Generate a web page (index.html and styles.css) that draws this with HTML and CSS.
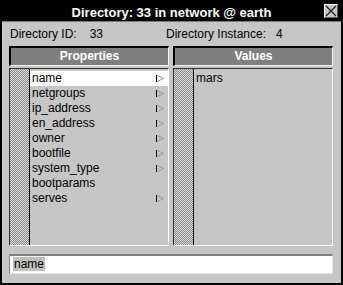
FILE: index.html
```html
<!DOCTYPE html>
<html lang="en">
<head>
  <meta charset="UTF-8" />
  <title>Directory: 33 in network @ earth</title>
  <link rel="stylesheet" href="styles.css">
</head>
<body>
  <svg class="defs" width="0" height="0">
    <defs>
      <pattern id="stipple" width="2" height="2" patternUnits="userSpaceOnUse">
        <rect width="2" height="2" fill="#d8d8d8"/>
        <rect width="1" height="1" fill="#8c8c8c"/>
        <rect x="1" y="1" width="1" height="1" fill="#8c8c8c"/>
      </pattern>
      <symbol id="arrow" viewBox="0 0 8 7">
        <path d="M0.5 0 V7" stroke="#000" stroke-width="1"/>
        <path d="M1.5 0.5 L7.5 3.5 L1.5 6.5" stroke="#999" stroke-width="1" fill="none"/>
      </symbol>
    </defs>
  </svg>

  <div class="window">
    <div class="titlebar">
      <span class="title">Directory: 33 in network @ earth</span>
      <button class="close" aria-label="Close">
        <svg width="12" height="12" viewBox="0 0 12 12">
          <path d="M1 1 L11 11 M11 1 L1 11" stroke="#202020" stroke-width="1.3" fill="none"/>
        </svg>
      </button>
    </div>

    <div class="content">
      <div class="info">
        <div class="info-item info-id">Directory ID:<span class="info-value">33</span></div>
        <div class="info-item">Directory Instance:<span class="info-value">4</span></div>
      </div>

      <div class="columns">
        <div class="column">
          <div class="col-head">Properties</div>
          <div class="panel">
            <svg class="gutter"><rect width="100%" height="100%" fill="url(#stipple)"/></svg>
            <ul class="list">
              <li class="row selected">name<svg class="arrow"><use href="#arrow"/></svg></li>
              <li class="row">netgroups<svg class="arrow"><use href="#arrow"/></svg></li>
              <li class="row">ip_address<svg class="arrow"><use href="#arrow"/></svg></li>
              <li class="row">en_address<svg class="arrow"><use href="#arrow"/></svg></li>
              <li class="row">owner<svg class="arrow"><use href="#arrow"/></svg></li>
              <li class="row">bootfile<svg class="arrow"><use href="#arrow"/></svg></li>
              <li class="row">system_type<svg class="arrow"><use href="#arrow"/></svg></li>
              <li class="row">bootparams</li>
              <li class="row">serves<svg class="arrow"><use href="#arrow"/></svg></li>
            </ul>
          </div>
        </div>

        <div class="column">
          <div class="col-head">Values</div>
          <div class="panel">
            <svg class="gutter"><rect width="100%" height="100%" fill="url(#stipple)"/></svg>
            <ul class="list">
              <li class="row">mars</li>
            </ul>
          </div>
        </div>
      </div>

      <div class="field"><span class="field-sel">name</span></div>
    </div>
  </div>
</body>
</html>
```

FILE: styles.css
```css
* {
  margin: 0;
  padding: 0;
  box-sizing: border-box;
}

body {
  font-family: 'Liberation Sans', Arial, sans-serif;
  font-size: 12px;
  color: #000;
  background: #c6c6c6;
}

.defs {
  position: absolute;
}

.window {
  width: 343px;
  height: 285px;
  border: 2px solid #000;
  background: #c6c6c6;
  display: flex;
  flex-direction: column;
}

/* title bar */
.titlebar {
  height: 20px;
  background: #000;
  border-bottom: 1px solid #7a7a7a;
  display: grid;
  grid-template-columns: 1fr auto 1fr;
  align-items: start;
  padding: 2px 3px 0;
}

.title {
  grid-column: 2;
  color: #fff;
  font-weight: bold;
  font-size: 13px;
  line-height: 16px;
  padding-top: 1px;
  white-space: nowrap;
}

.close {
  grid-column: 3;
  justify-self: end;
  width: 14px;
  height: 14px;
  background: #c6c6c6;
  border: 1px solid;
  border-color: #f0f0f0 #606060 #606060 #f0f0f0;
  display: flex;
  align-items: center;
  justify-content: center;
}

/* body */
.content {
  flex: 1;
  padding: 5px 8px 9px 7px;
  display: flex;
  flex-direction: column;
}

.info {
  display: flex;
  line-height: 14px;
  padding-left: 1px;
}

.info-id {
  width: 156px;
}

.info-value {
  margin-left: 13px;
}

.info-item:last-child .info-value {
  margin-left: 10px;
}

.columns {
  margin-top: 5px;
  display: grid;
  grid-template-columns: 160px 160px;
  gap: 4px;
}

.col-head {
  height: 20px;
  background: #7f7f7f;
  border: 1px solid;
  border-width: 2px 1px 1px 2px;
  border-color: #000 #f4f4f4 #f4f4f4 #000;
  color: #fff;
  font-weight: bold;
  text-align: center;
  line-height: 16px;
}

.panel {
  margin-top: 2px;
  height: 178px;
  display: flex;
  border: 1px solid;
  border-color: #303030 #fff #fff #303030;
}

.gutter {
  display: block;
  width: 20px;
  height: 100%;
  flex: none;
  border-right: 1px solid #000;
}

.list {
  flex: 1;
  list-style: none;
  padding-top: 2px;
}

.row {
  height: 15px;
  line-height: 15px;
  padding: 0 4px 0 2px;
  display: flex;
  align-items: center;
  justify-content: space-between;
  white-space: nowrap;
}

.row.selected {
  background: #fff;
}

.arrow {
  width: 8px;
  height: 7px;
  flex: none;
}

/* entry field */
.field {
  margin-top: 8px;
  height: 20px;
  background: #fff;
  border: 1px solid;
  border-width: 2px 1px 1px 1px;
  border-color: #7f7f7f #e4e4e4 #e4e4e4 #7f7f7f;
  padding: 1px 0 0 3px;
}

.field-sel {
  display: inline-block;
  background: #c0c0c0;
  line-height: 14px;
  padding: 0 1px;
}
```
